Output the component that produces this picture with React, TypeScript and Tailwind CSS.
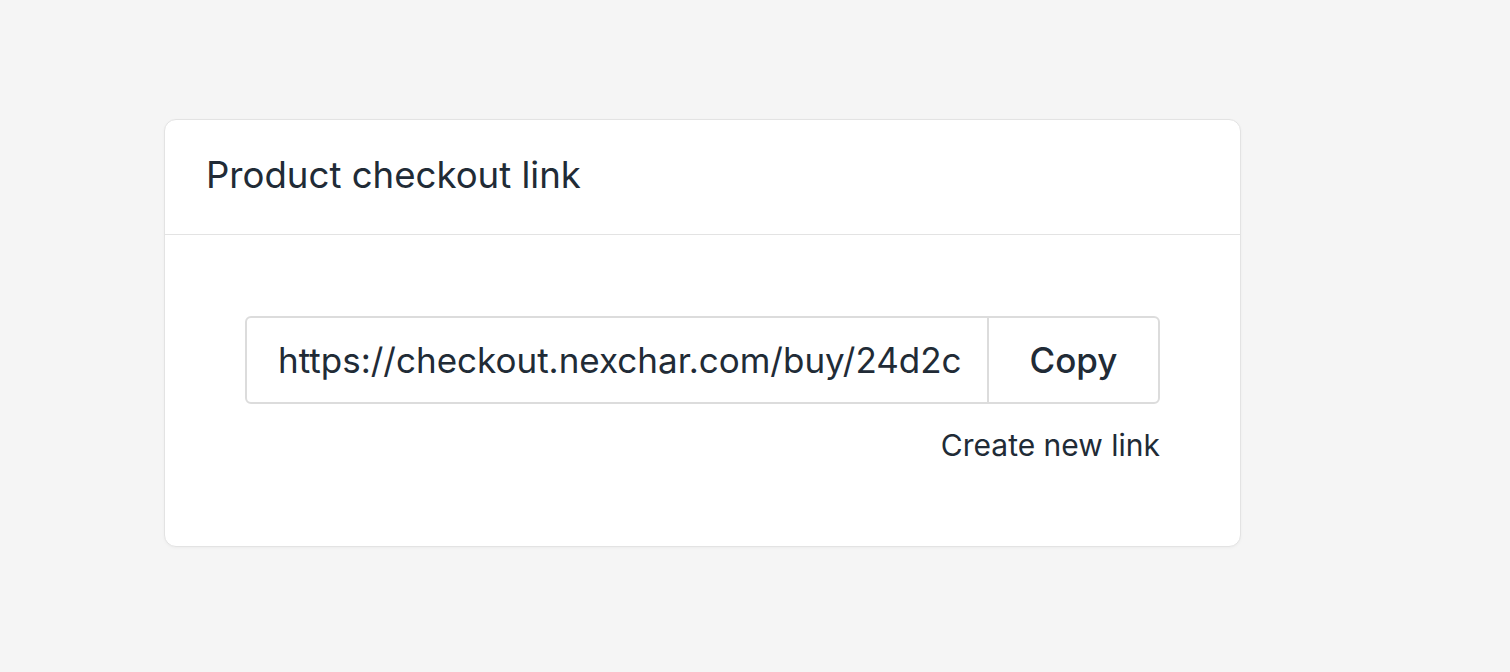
export default function App() {
  return (
    <div
      className="min-h-screen bg-[#f5f5f5] pt-[119px] pl-[164px]"
      style={{ fontFamily: "Inter, 'Noto Sans', sans-serif" }}
    >
      <div className="w-[1077px] h-[428px] bg-white border border-[#e3e3e3] rounded-[12px] shadow-[0_1px_3px_rgba(0,0,0,0.04)]">
        {/* Header */}
        <div className="h-[115px] flex items-center px-[41px] pb-[3px] border-b border-[#e3e3e3]">
          <h2 className="text-[36.6px] text-[#212b36] font-normal">
            Product checkout link
          </h2>
        </div>

        {/* Body */}
        <div className="px-[80px] pt-[81px]">
          <div className="flex h-[88px] border-2 border-[#dcdcdc] rounded-[6px] overflow-hidden">
            <div className="flex-1 flex items-center pl-[31px] text-[35px] text-[#212b36] whitespace-nowrap overflow-hidden">
              https://checkout.nexchar.com/buy/24d2c
            </div>
            <button className="w-[171px] border-l-2 border-[#dcdcdc] text-[35px] font-medium text-[#212b36]">
              Copy
            </button>
          </div>
          <div className="flex justify-end mt-[19px]">
            <button className="text-[30px] text-[#212b36]">Create new link</button>
          </div>
        </div>
      </div>
    </div>
  );
}
